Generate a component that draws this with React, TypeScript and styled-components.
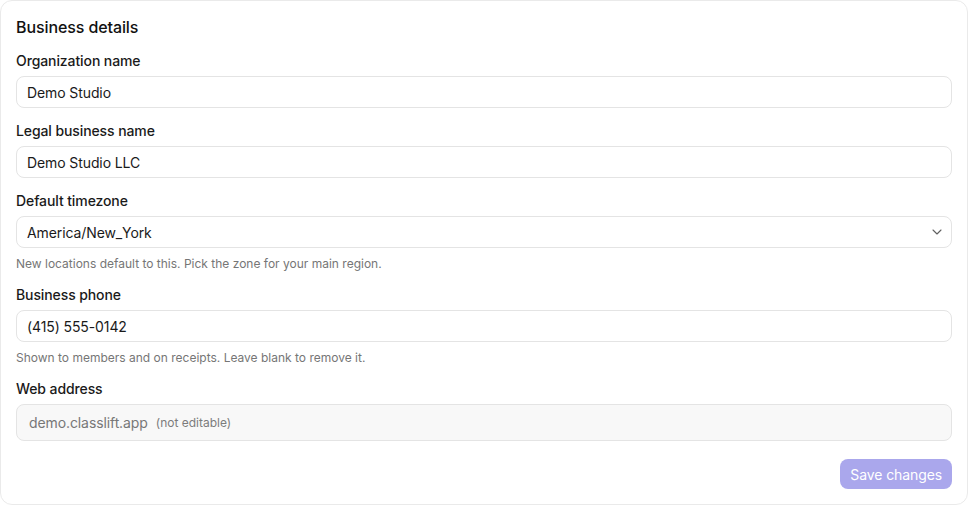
import React from "react";
import styled, { createGlobalStyle } from "styled-components";

const Global = createGlobalStyle`
  html, body { margin: 0; padding: 0; background: #ffffff; }
  body {
    font-family: Inter, "Noto Sans", "Liberation Sans", sans-serif;
    -webkit-font-smoothing: antialiased;
    color: #1a1a1a;
  }
  * { box-sizing: border-box; }
`;

const Card = styled.section`
  width: 968px;
  background: #ffffff;
  border: 1px solid #eaeaea;
  border-radius: 12px;
  padding: 15px;
  display: flex;
  flex-direction: column;
  gap: 14px;
`;

const Title = styled.h2`
  margin: 0;
  font-size: 16px;
  line-height: 22px;
  font-weight: 500;
  color: #111111;
  letter-spacing: -0.1px;
`;

const Field = styled.div`
  display: flex;
  flex-direction: column;
`;

const Label = styled.label`
  font-size: 14px;
  line-height: 18px;
  font-weight: 500;
  color: #1a1a1a;
  margin-bottom: 6px;
  letter-spacing: -0.1px;
`;

const Input = styled.input`
  height: 32px;
  width: 100%;
  border: 1px solid #e4e4e4;
  border-radius: 8px;
  padding: 0 10px;
  font-family: inherit;
  font-size: 14px;
  color: #1a1a1a;
  background: #ffffff;
  outline: none;
  letter-spacing: -0.1px;
`;

const SelectBox = styled.div`
  height: 32px;
  border: 1px solid #e4e4e4;
  border-radius: 8px;
  padding: 0 6px 0 10px;
  display: flex;
  align-items: center;
  justify-content: space-between;
  font-size: 14px;
  color: #1a1a1a;
  background: #ffffff;
  letter-spacing: -0.1px;
`;

const Chevron = styled.svg`
  width: 16px;
  height: 16px;
  color: #5f5f5f;
`;

const Help = styled.p`
  margin: 8px 0 0;
  font-size: 12px;
  line-height: 16px;
  color: #767676;
`;

const ReadOnlyBox = styled.div`
  height: 37px;
  border: 1px solid #e4e4e4;
  border-radius: 8px;
  background: #f8f8f8;
  padding: 0 12px;
  display: flex;
  align-items: center;
  gap: 8px;
`;

const ReadOnlyValue = styled.span`
  font-size: 14px;
  color: #777777;
  letter-spacing: -0.1px;
`;

const ReadOnlyNote = styled.span`
  font-size: 12px;
  color: #7c7c7c;
`;

const Footer = styled.div`
  display: flex;
  justify-content: flex-end;
  margin-top: 4px;
`;

const SaveButton = styled.button`
  height: 30px;
  padding: 0 10px;
  border: none;
  border-radius: 8px;
  background: #aaa7ec;
  color: #ffffff;
  font-family: inherit;
  font-size: 14px;
  font-weight: 400;
  cursor: not-allowed;
  letter-spacing: -0.1px;
`;

export default function App() {
  return (
    <>
      <Global />
      <Card>
        <Title>Business details</Title>
        <Field>
          <Label>Organization name</Label>
          <Input defaultValue="Demo Studio" />
        </Field>
        <Field>
          <Label>Legal business name</Label>
          <Input defaultValue="Demo Studio LLC" />
        </Field>
        <Field>
          <Label>Default timezone</Label>
          <SelectBox>
            <span>America/New_York</span>
            <Chevron viewBox="0 0 24 24" fill="none" stroke="currentColor" strokeWidth="1.6" strokeLinecap="round" strokeLinejoin="round">
              <path d="m6 9 6 6 6-6" />
            </Chevron>
          </SelectBox>
          <Help>New locations default to this. Pick the zone for your main region.</Help>
        </Field>
        <Field>
          <Label>Business phone</Label>
          <Input defaultValue="(415) 555-0142" />
          <Help>Shown to members and on receipts. Leave blank to remove it.</Help>
        </Field>
        <Field>
          <Label>Web address</Label>
          <ReadOnlyBox>
            <ReadOnlyValue>demo.classlift.app</ReadOnlyValue>
            <ReadOnlyNote>(not editable)</ReadOnlyNote>
          </ReadOnlyBox>
        </Field>
        <Footer>
          <SaveButton disabled>Save changes</SaveButton>
        </Footer>
      </Card>
    </>
  );
}
